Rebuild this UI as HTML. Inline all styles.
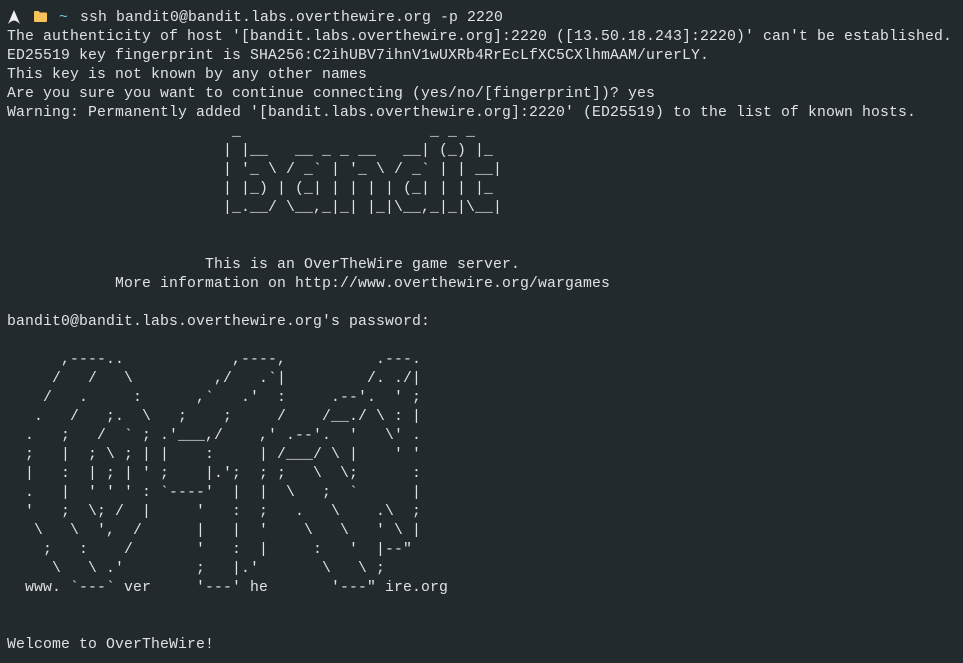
<!DOCTYPE html>
<html><head><meta charset="utf-8"><style>
html,body{margin:0;padding:0;background:#232a2d;width:963px;height:663px;overflow:hidden}
pre{margin:0;position:absolute;left:7px;top:9px;font-family:"Liberation Mono","DejaVu Sans Mono",monospace;font-size:14.8px;line-height:19px;letter-spacing:0.12px;color:#dfe2e3;white-space:pre}
.p{position:absolute}
.t{position:absolute;top:9px;font-family:"Liberation Mono","DejaVu Sans Mono",monospace;font-size:14.8px;line-height:19px;letter-spacing:0.12px;color:#dfe2e3;white-space:pre}
</style></head><body>
<svg class="p" style="left:8px;top:10px" width="12" height="14" viewBox="0 0 12 14"><path d="M6 0 L12 14 Q9 11 6 10.5 Q3 11 0 14 Z" fill="#f0f0f0"/></svg>
<svg class="p" style="left:34px;top:11px" width="13" height="11" viewBox="0 0 13 11"><path d="M0 1 Q0 0 1 0 H4.5 L6 1.5 H12 Q13 1.5 13 2.5 V10 Q13 11 12 11 H1 Q0 11 0 10 Z" fill="#f6c35a"/></svg>
<div class="t" style="left:59px;color:#5fd0e0">~</div>
<div class="t" style="left:80px">ssh bandit0@bandit.labs.overthewire.org -p 2220</div>
<pre>

The authenticity of host '[bandit.labs.overthewire.org]:2220 ([13.50.18.243]:2220)' can't be established.
ED25519 key fingerprint is SHA256:C2ihUBV7ihnV1wUXRb4RrEcLfXC5CXlhmAAM/urerLY.
This key is not known by any other names
Are you sure you want to continue connecting (yes/no/[fingerprint])? yes
Warning: Permanently added '[bandit.labs.overthewire.org]:2220' (ED25519) to the list of known hosts.
                         _                     _ _ _
                        | |__   __ _ _ __   __| (_) |_
                        | '_ \ / _` | '_ \ / _` | | __|
                        | |_) | (_| | | | | (_| | | |_
                        |_.__/ \__,_|_| |_|\__,_|_|\__|


                      This is an OverTheWire game server.
            More information on http://www.overthewire.org/wargames

bandit0@bandit.labs.overthewire.org's password:

      ,----..            ,----,          .---.
     /   /   \         ,/   .`|         /. ./|
    /   .     :      ,`   .'  :     .--'.  ' ;
   .   /   ;.  \   ;    ;     /    /__./ \ : |
  .   ;   /  ` ; .'___,/    ,' .--'.  '   \' .
  ;   |  ; \ ; | |    :     | /___/ \ |    ' '
  |   :  | ; | ' ;    |.';  ; ;   \  \;      :
  .   |  ' ' ' : `----'  |  |  \   ;  `      |
  '   ;  \; /  |     '   :  ;   .   \    .\  ;
   \   \  ',  /      |   |  '    \   \   ' \ |
    ;   :    /       '   :  |     :   '  |--"
     \   \ .'        ;   |.'       \   \ ;
  www. `---` ver     '---' he       '---" ire.org


Welcome to OverTheWire!</pre>
</body></html>
